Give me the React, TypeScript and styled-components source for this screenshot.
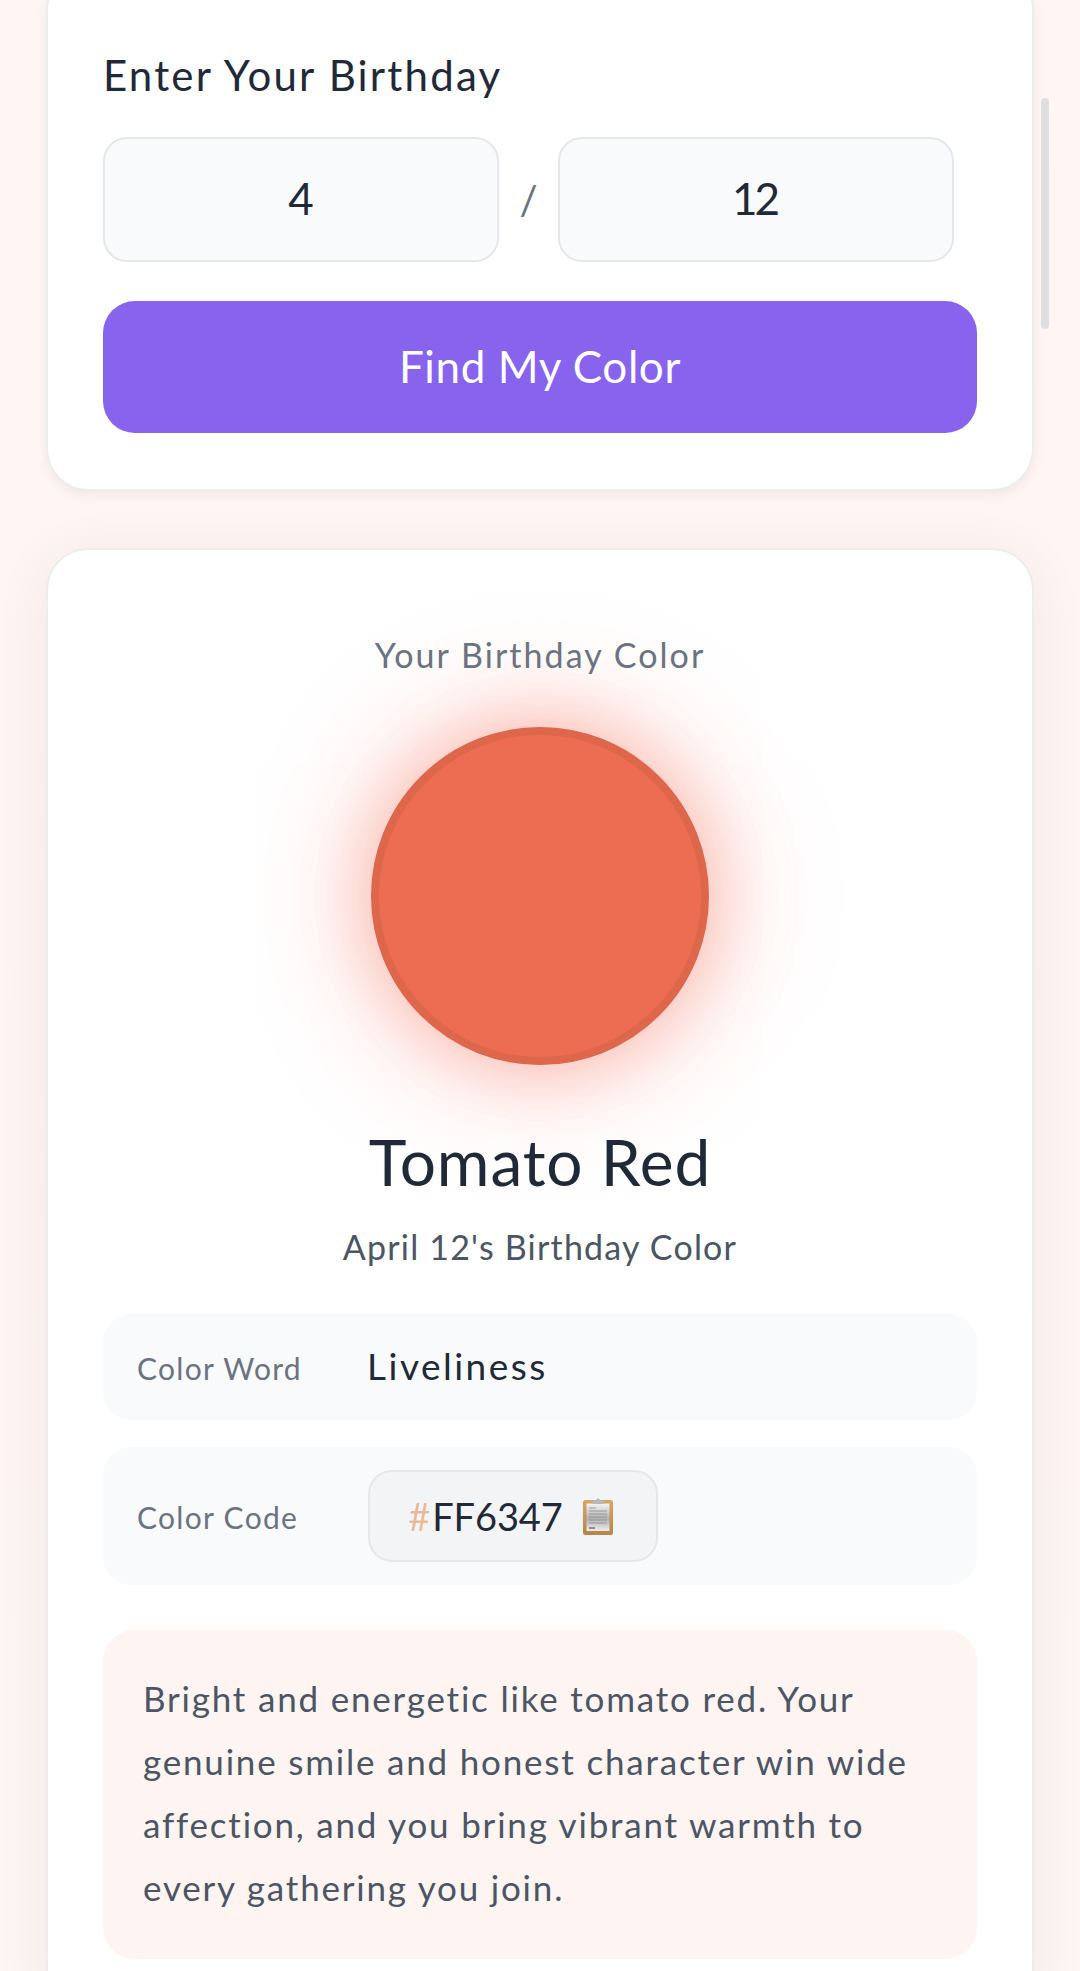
import React from "react";
import styled, { createGlobalStyle } from "styled-components";

const Global = createGlobalStyle`
  html, body { margin: 0; padding: 0; background: #fff5f3; }
  * { box-sizing: border-box; }
  body { font-family: Lato, "Noto Sans", sans-serif; }
`;

const Page = styled.div`
  position: relative;
  width: 1080px;
  height: 1971px;
  overflow: hidden;
  background: linear-gradient(180deg, #fff5f3 0%, #fef6f3 100%);
  padding: 0 46px;
  display: flex;
  flex-direction: column;
  gap: 57px;
`;

const InputCard = styled.section`
  margin-top: -33px;
  background: #ffffff;
  border: 2px solid rgba(0, 0, 0, 0.07);
  border-radius: 42px;
  padding: 78px 55px 56px;
  box-shadow: 0 4px 12px rgba(0, 0, 0, 0.06);
  display: flex;
  flex-direction: column;
`;

const Heading = styled.h2`
  margin: 0 0 34px;
  font-size: 42px;
  font-weight: 400;
  line-height: 56px;
  color: #1f2937;
  letter-spacing: 2.2px;
`;

const DateRow = styled.div`
  display: flex;
  align-items: center;
  gap: 20px;
  margin-bottom: 39px;
`;

const DateInput = styled.input`
  width: 396px;
  height: 125px;
  border: 2px solid #e5e7eb;
  border-radius: 24px;
  background: #f9fafb;
  text-align: center;
  font: 400 44px Lato, sans-serif;
  letter-spacing: -3px;
  padding: 0 3px 3px 0;
  color: #1f2937;
  outline: none;
`;

const Slash = styled.span`
  font-size: 40px;
  color: #6b7280;
  width: 19px;
  text-align: center;
`;

const FindButton = styled.button`
  width: 100%;
  height: 132px;
  border: 0;
  border-radius: 32px;
  background: #8763ee;
  color: #ffffff;
  font: 400 44px Lato, sans-serif;
  letter-spacing: 0.6px;
  padding: 0 0 3px;
`;

const ResultCard = styled.section`
  background: #ffffff;
  border: 2px solid rgba(0, 0, 0, 0.07);
  border-radius: 42px;
  padding: 81px 55px 0;
  box-shadow: 0 8px 60px rgba(0, 0, 0, 0.06);
  flex: 1;
  margin-bottom: -60px;
`;

const Overline = styled.p`
  margin: 0;
  text-align: center;
  font-size: 34px;
  line-height: 48px;
  color: #6b7280;
  letter-spacing: 2.05px;
`;

const Swatch = styled.div`
  width: 338px;
  height: 338px;
  margin: 48px auto 0;
  border-radius: 50%;
  background: #ec6d52;
  border: 8px solid #dd664b;
  box-shadow: 0 0 90px rgba(245, 99, 75, 0.55), 0 0 180px rgba(245, 99, 75, 0.1);
`;

const ColorName = styled.h1`
  margin: 57px 0 0;
  text-align: center;
  font-size: 64px;
  font-weight: 400;
  line-height: 80px;
  color: #1f2937;
  letter-spacing: 0.9px;
`;

const Subtitle = styled.p`
  margin: 21px 0 0;
  text-align: center;
  font-size: 34px;
  line-height: 48px;
  color: #4b5563;
  letter-spacing: 1.2px;
`;

const Rows = styled.div`
  margin-top: 43px;
  display: flex;
  flex-direction: column;
  gap: 27px;
`;

const Row = styled.div<{ $height: number }>`
  display: flex;
  align-items: center;
  height: ${(p) => p.$height}px;
  padding: 0 34px;
  background: #f9fafb;
  border-radius: 28px;
`;

const RowLabel = styled.span`
  width: 230px;
  padding-top: 2px;
  font-size: 30px;
  color: #6b7280;
  letter-spacing: 1.3px;
`;

const RowValue = styled.span`
  padding-bottom: 3px;
  font-size: 37px;
  color: #1f2937;
  letter-spacing: 2.5px;
`;

const CodeChip = styled.div`
  display: flex;
  align-items: center;
  justify-content: center;
  gap: 20px;
  width: 290px;
  height: 92px;
  margin-left: 1px;
  padding-right: 5px;
  border: 2px solid #e5e7eb;
  border-radius: 24px;
  background: #f3f4f6;
  font-size: 38px;
  color: #1f2937;
  letter-spacing: -0.1px;
`;

const Hash = styled.span`
  margin-right: 2px;
  color: transparent;
  background: linear-gradient(135deg, #e8aea5 0%, #e6c48e 100%);
  -webkit-background-clip: text;
  background-clip: text;
`;

const Story = styled.div`
  margin-top: 45px;
  padding: 37px 40px 40px;
  background: #fef4f2;
  border-radius: 32px;
  font-size: 35px;
  line-height: 63px;
  color: #4b5563;
  letter-spacing: 1.8px;
`;

const ScrollThumb = styled.div`
  position: absolute;
  top: 98px;
  left: 1041px;
  width: 8px;
  height: 231px;
  border-radius: 4px;
  background: #e0dfe0;
`;

const ClipboardIcon = () => (
  <svg width="30" height="38" viewBox="0 0 30 38" aria-hidden="true">
    <defs>
      <linearGradient id="board" x1="0" y1="0" x2="0" y2="1">
        <stop offset="0" stopColor="#d9a665" />
        <stop offset="1" stopColor="#b98447" />
      </linearGradient>
      <linearGradient id="paper" x1="0" y1="0" x2="0" y2="1">
        <stop offset="0" stopColor="#f4f4f4" />
        <stop offset="0.55" stopColor="#b2b2b4" />
        <stop offset="1" stopColor="#ececec" />
      </linearGradient>
    </defs>
    <rect x="0" y="3" width="30" height="35" rx="2.5" fill="url(#board)" />
    <rect x="3.5" y="6.5" width="23" height="27.5" fill="url(#paper)" />
    <path d="M9 7 L10 3.5 H13 A2 2 0 0 1 17 3.5 H20 L21 7 Z" fill="#b9b9bb" />
    <path d="M6 11h7M6 14h18M6 17h18M6 20h18M6 23h18M6 26h18" stroke="#8b8b8e" strokeWidth="0.8" />
    <path d="M6 31h6" stroke="#6e6e70" strokeWidth="1.4" />
  </svg>
);

export default function App() {
  return (
    <>
      <Global />
      <Page>
        <InputCard>
          <Heading>Enter Your Birthday</Heading>
          <DateRow>
            <DateInput defaultValue="4" />
            <Slash>/</Slash>
            <DateInput defaultValue="12" />
          </DateRow>
          <FindButton>Find My Color</FindButton>
        </InputCard>
        <ResultCard>
          <Overline>Your Birthday Color</Overline>
          <Swatch />
          <ColorName>Tomato Red</ColorName>
          <Subtitle>April 12's Birthday Color</Subtitle>
          <Rows>
            <Row $height={106}>
              <RowLabel>Color Word</RowLabel>
              <RowValue>Liveliness</RowValue>
            </Row>
            <Row $height={138}>
              <RowLabel>Color Code</RowLabel>
              <CodeChip>
                <span>
                  <Hash>#</Hash>FF6347
                </span>
                <ClipboardIcon />
              </CodeChip>
            </Row>
          </Rows>
          <Story>
            Bright and energetic like tomato red. Your genuine smile and honest character win wide
            affection, and you bring vibrant warmth to every gathering you join.
          </Story>
        </ResultCard>
        <ScrollThumb />
      </Page>
    </>
  );
}
